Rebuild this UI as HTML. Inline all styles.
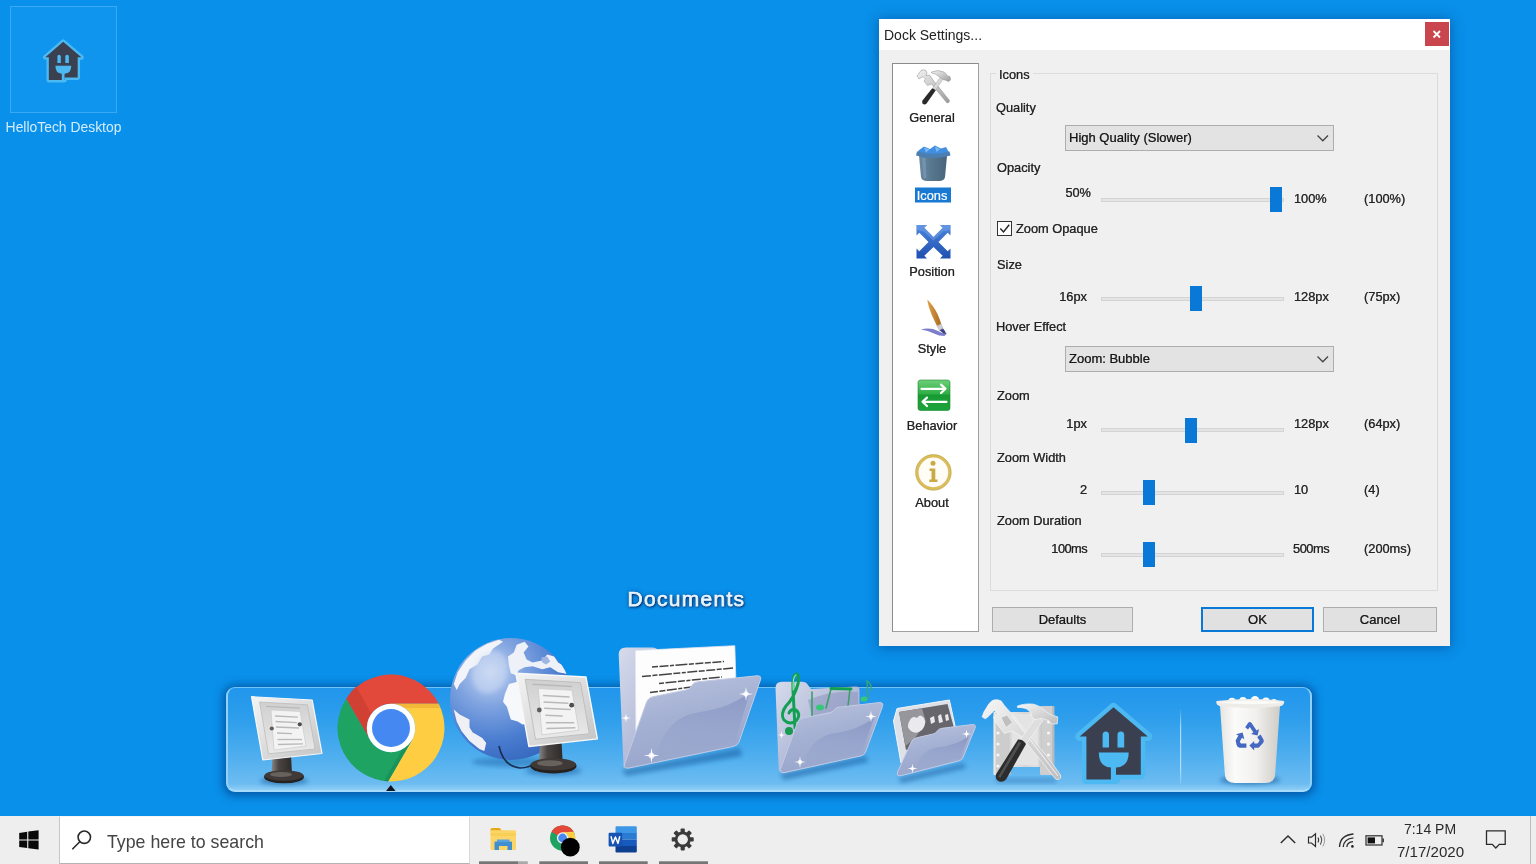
<!DOCTYPE html>
<html>
<head>
<meta charset="utf-8">
<title>Dock Settings</title>
<style>
*{box-sizing:border-box;margin:0;padding:0}
html,body{width:1536px;height:864px;overflow:hidden}
body{background:#0990ea;font-family:"Liberation Sans",sans-serif;position:relative}
.abs{position:absolute}
.t{position:absolute;z-index:4;white-space:nowrap;margin-top:1px;font-size:12.8px;color:#222;-webkit-text-stroke:.22px #2a2a2a;line-height:16px;text-shadow:0 0 .6px rgba(0,0,0,.4)}
.r{text-align:right}
/* desktop icon */
#dicon{position:absolute;left:10px;top:6px;width:107px;height:107px;border:1px solid #39a9f3;background:#0f95ee}
#dlabel{filter:blur(.3px);position:absolute;left:0;top:118px;width:127px;text-align:center;font-size:13.9px;color:#d3ecfd;line-height:18px}
/* dialog */
#dlg{position:absolute;left:879px;top:19px;width:571px;height:627px;background:#f0f0f0;box-shadow:0 1px 12px 1px rgba(0,40,110,.42)}
#title{position:absolute;left:0;top:0;width:571px;height:31px;background:#fff}
#title span{filter:blur(.3px);position:absolute;left:5px;top:8px;font-size:14px;line-height:17px;color:#222}
#close{position:absolute;left:546px;top:3px;width:24px;height:24px;background:#c9464e}
#side{position:absolute;left:13px;top:44px;width:87px;height:569px;background:#fff;border:1px solid #a0a0a0;border-top:1.5px solid #8c8c8c;border-left:1.5px solid #8c8c8c}
#grp{position:absolute;left:111px;top:54px;width:448px;height:518px;border:1px solid #dcdcdc}
.combo{position:absolute;width:269px;height:26px;background:#e3e3e3;border:1px solid #adadad}
.combo span{filter:blur(.3px);-webkit-text-stroke:.22px #2a2a2a;position:absolute;left:3px;top:4px;font-size:13px;line-height:16px;color:#111;text-shadow:0 0 .6px rgba(0,0,0,.35)}
.track{position:absolute;margin-top:.5px;width:183px;height:4px;background:#e4e4e4;border:1px solid #d4d4d4}
.thumb{position:absolute;margin-top:.5px;width:12px;height:25px;background:#0a78d7}
.g{display:inline-block;filter:blur(.3px);-webkit-text-stroke:.22px #2a2a2a}
.btn{position:absolute;top:588px;height:25px;background:#e1e1e1;border:1px solid #adadad;text-align:center;font-size:13px;line-height:23px;color:#111;text-shadow:0 0 .6px rgba(0,0,0,.35)}
/* taskbar */
#tb{position:absolute;left:0;top:816px;width:1536px;height:48px;background:#eeeeee}
#tbin{position:absolute;left:0;top:0;width:1536px;height:48px;filter:blur(.3px)}
#search{position:absolute;left:59px;top:0px;width:411px;height:48px;background:#fff;border-left:1px solid #c6c6c6;border-right:1px solid #d8d8d8;border-top:1px solid #f6f6f6;border-bottom:1.5px solid #b4b4b4}
#search span{filter:blur(.3px);position:absolute;left:47px;top:13.7px;font-size:17.75px;line-height:22px;color:#444}
.run{position:absolute;top:45px;height:3px;width:49px;background:#8a8a8a}
/* dock */
#dock{position:absolute;left:226px;top:687px;width:1086px;height:105px;border-radius:9px;border:2.5px solid #8fd1f9;border-top:1.5px solid #6fc3f7;border-bottom:2px solid #a6dbfb;background:linear-gradient(#2196ec 0%,#2e9eec 30%,#48abee 60%,#6dbcf1 94%,#8fcef6 100%);box-shadow:0 1px 9px 3px rgba(0,55,125,.6)}
#doclbl{position:absolute;left:627.5px;top:586px;font-size:21px;font-weight:400;-webkit-text-stroke:.75px #eaf4fc;letter-spacing:1.3px;color:#eaf4fc;line-height:26px;text-shadow:1px 1px 2px rgba(0,35,90,.95),0 0 4px rgba(0,35,90,.6),0 1px 3px rgba(0,35,90,.6);filter:blur(.35px)}
</style>
</head>
<body>

<!-- desktop icon -->
<div id="dicon"></div>
<div id="dlabel">HelloTech Desktop</div>

<!-- DOCK -->
<div id="doclbl">Documents</div>
<div id="dock"></div>
<!--DOCKICONS-->
<svg class="abs" style="left:0;top:0;filter:blur(.45px)" width="1536" height="864" viewBox="0 0 1536 864">
<defs>
  <linearGradient id="gFrame" x1="0" y1="0" x2="1" y2="1"><stop offset="0" stop-color="#f4f4f4"/><stop offset=".5" stop-color="#dcdcdc"/><stop offset="1" stop-color="#c4c4c6"/></linearGradient>
  <linearGradient id="gScr" x1="0" y1="0" x2="0" y2="1"><stop offset="0" stop-color="#d0d0d0"/><stop offset="1" stop-color="#e9e9e9"/></linearGradient>
  <linearGradient id="gNeck" x1="0" y1="0" x2="1" y2="0"><stop offset="0" stop-color="#8a8684"/><stop offset=".35" stop-color="#4a4542"/><stop offset="1" stop-color="#2e2a28"/></linearGradient>
  <radialGradient id="gGlobe" cx=".33" cy=".28" r=".8"><stop offset="0" stop-color="#c4d4f2"/><stop offset=".35" stop-color="#7fa3e0"/><stop offset=".7" stop-color="#4a7dd0"/><stop offset="1" stop-color="#3467bd"/></radialGradient>
  <linearGradient id="gFold" x1="0" y1="0" x2=".3" y2="1"><stop offset="0" stop-color="#b9c3df"/><stop offset=".5" stop-color="#a5b1d3"/><stop offset="1" stop-color="#99a6cc"/></linearGradient>
  <linearGradient id="gFoldB" x1="0" y1="0" x2="1" y2="1"><stop offset="0" stop-color="#d6dbeb"/><stop offset=".5" stop-color="#b4bcd9"/><stop offset="1" stop-color="#8f9ac1"/></linearGradient>
  <linearGradient id="gWave" x1="0" y1="0" x2="0" y2="1"><stop offset="0" stop-color="#8593c2"/><stop offset="1" stop-color="#98a6ce" stop-opacity=".25"/></linearGradient>
  <linearGradient id="gBin" x1="0" y1="0" x2="1" y2="0"><stop offset="0" stop-color="#e6e4e0"/><stop offset=".25" stop-color="#fbfbfa"/><stop offset=".6" stop-color="#f1f0ed"/><stop offset="1" stop-color="#cfccc6"/></linearGradient>
  <linearGradient id="gSil" x1="0" y1="0" x2="1" y2="1"><stop offset="0" stop-color="#f6f6f6"/><stop offset=".5" stop-color="#d8d8d8"/><stop offset="1" stop-color="#bdbdbd"/></linearGradient>
  <linearGradient id="gPlate" x1="0" y1="0" x2="1" y2="0"><stop offset="0" stop-color="#c9c9c9"/><stop offset=".15" stop-color="#e4e4e4"/><stop offset=".5" stop-color="#d6d6d6"/><stop offset=".85" stop-color="#e2e2e2"/><stop offset="1" stop-color="#c6c6c6"/></linearGradient>
  <linearGradient id="gRedSh" x1="346" y1="699" x2="375" y2="683" gradientUnits="userSpaceOnUse"><stop offset="0" stop-color="#b8362a"/><stop offset="1" stop-color="#e2493a"/></linearGradient>
  <filter id="bl1" x="-20%" y="-20%" width="140%" height="140%"><feGaussianBlur stdDeviation="0.7"/></filter>
  <filter id="bl2" x="-30%" y="-30%" width="160%" height="160%"><feGaussianBlur stdDeviation="2.2"/></filter>
  <g id="spark"><path d="M0-6L.8-.8 6 0 .8.8 0 6-.8.8-6 0-.8-.8Z" fill="#fff"/><circle r="2.2" fill="#fff" opacity=".7"/></g>
  <g id="house">
  <path d="M1113.5 707.3 L1147.8 736.6 L1140.8 736.6 L1140.8 774.8 L1116 774.8 L1116 779.5 L1086.4 779.5 L1086.4 736.6 L1079.7 736.6Z" fill="none" stroke="#4db9f2" stroke-width="9" stroke-linejoin="round"/>
  <path d="M1113.5 707.3 L1147.8 736.6 L1140.8 736.6 L1140.8 774.8 L1116 774.8 L1116 779.5 L1086.4 779.5 L1086.4 736.6 L1079.7 736.6Z" fill="#3b4050"/>
  <path d="M1102.6 747.4 L1102.6 735 Q1102.6 731.5 1105.8 731.5 Q1109 731.5 1109 735 L1109 747.4Z" fill="#4db9f2"/>
  <path d="M1117.5 747.4 L1117.5 735 Q1117.5 731.5 1120.8 731.5 Q1124.2 731.5 1124.2 735 L1124.2 747.4Z" fill="#4db9f2"/>
  <path d="M1098.8 752.5 L1128.7 752.5 Q1128.7 767 1116 767.5 L1116 780 L1110.9 780 L1110.9 767.5 Q1098.8 767 1098.8 752.5Z" fill="#4db9f2"/>
</g>
  <g id="monitor">
    <ellipse cx="284" cy="781" rx="24" ry="4" fill="#0c4f92" opacity=".5" filter="url(#bl2)"/>
    <path d="M272.5 757 L291 755 L292 774 L271.5 774Z" fill="url(#gNeck)"/>
    <ellipse cx="284" cy="777" rx="20" ry="6.3" fill="#262220"/>
    <ellipse cx="284" cy="775.5" rx="19.5" ry="5.2" fill="#3f3a37"/>
    <ellipse cx="281" cy="774.5" rx="11" ry="2.6" fill="#8a837e" opacity=".55"/>
    <path d="M251.5 696.7 L312.2 700 L322 753.5 L262.8 760Z" fill="url(#gFrame)" stroke="#f8f8f8" stroke-width="1.2" stroke-linejoin="round"/>
    <path d="M259.6 702 L307.5 704.8 L315 749 L268.5 753.8Z" fill="url(#gScr)" stroke="#bdbdbd" stroke-width=".8"/>
    <path d="M271 710 L300 711.5 L306 746 L274 750Z" fill="#f3f3f3" stroke="#c8c8c8" stroke-width=".6"/>
    <g stroke="#b9b9b9" stroke-width="1.3" fill="none">
      <path d="M266 706.3 L300 708.2"/><path d="M275 716 L298 717.2"/><path d="M275.5 721.5 L297 722.6"/><path d="M276 727 L299 728"/><path d="M277 733 L292 733.6"/><path d="M277.5 739.5 L302 739.5"/><path d="M278 744.5 L303 743.8"/>
    </g>
    <circle cx="271.8" cy="728.5" r="2.1" fill="#5d5d5d"/><circle cx="299.8" cy="724.3" r="2.1" fill="#4d4d4d"/>
  </g>
</defs>

<!-- 1: monitor -->
<use href="#monitor"/>

<!-- 2: chrome -->
<g>
  <path d="M391.0 703.8 L438.7 703.8 A53.5 53.5 0 0 0 346.2 698.8 L370.0 740.1 A24.2 24.2 0 0 1 391.0 703.8 Z" fill="#e2493a"/>
  <path d="M346.2 698.8 L370.0 740.1 A24.2 24.2 0 0 1 372 715 L356 686 A53.5 53.5 0 0 0 346.2 698.8Z" fill="#c23b2e" opacity=".55"/>
  <path d="M412.0 740.1 L388.1 781.4 A53.5 53.5 0 0 0 438.7 703.8 L391.0 703.8 A24.2 24.2 0 0 1 412.0 740.1 Z" fill="#ffcd42"/>
  <path d="M391 703.8 L438.7 703.8 L440 708 L404 708 A24.2 24.2 0 0 0 391 703.8Z" fill="#e9a832" opacity=".55"/>
  <path d="M370.0 740.1 L346.2 698.8 A53.5 53.5 0 0 0 388.1 781.4 L412.0 740.1 A24.2 24.2 0 0 1 370.0 740.1 Z" fill="#1ea362"/>
  <path d="M412 740.1 L388.1 781.4 L384 780.8 L406 743 Z" fill="#16834d" opacity=".5"/>
  <circle cx="391" cy="728" r="24.2" fill="#fff"/>
  <circle cx="391" cy="728" r="19" fill="#4688f1"/>
  <path d="M386 791 L390.8 785 L395.6 791Z" fill="#101820"/>
</g>

<!-- 3: globe + monitor -->
<g>
  <ellipse cx="512" cy="762" rx="40" ry="5" fill="#0c4f92" opacity=".35" filter="url(#bl2)"/>
  <circle cx="511" cy="699" r="61" fill="url(#gGlobe)"/>
  <clipPath id="cGlobe"><circle cx="511" cy="699" r="61"/></clipPath>
  <g clip-path="url(#cGlobe)" filter="url(#bl1)">
        <path d="M453.8 684.0 L457.7 672.2 L465.6 660.4 L475.4 650.6 L487.2 643.7 L499.0 639.8 L503.0 641.7 L493.1 648.6 L489.2 654.5 L482.3 656.5 L477.4 664.4 L469.5 669.3 L465.6 678.1 L459.7 684.0 L456.7 689.9Z" fill="#f2f4f9"/>
    <path d="M453.8 709.6 L459.7 714.5 L469.5 719.5 L469.5 727.3 L472.5 732.2 L482.3 738.1 L486.2 743.1 L484.3 750.9 L479.4 749.0 L469.5 741.1 L461.6 731.3 L456.7 721.4Z" fill="#eef0f6"/>
    <path d="M507.9 656.5 L513.8 652.5 L516.7 644.7 L524.6 641.7 L528.5 646.6 L523.6 652.5 L526.6 659.4 L532.5 662.4 L542.3 660.4 L547.2 654.5 L554.1 656.5 L558.1 662.4 L565.9 667.3 L568.9 674.2 L558.1 672.2 L550.2 667.3 L542.3 669.3 L532.5 666.3 L524.6 667.3 L518.7 670.3 L515.8 675.2 L510.8 673.2 L508.9 665.3Z" fill="#eef1f7"/>
    <path d="M508.9 684.0 L516.7 682.1 L524.6 684.0 L528.5 689.9 L528.5 723.4 L522.6 724.4 L517.7 721.4 L510.8 719.5 L508.9 713.5 L506.9 706.7 L503.0 701.7 L504.9 693.9Z" fill="#f7f8fb"/>
    <path d="M541.3 657.5 L547.2 656.5 L550.2 661.4 L546.3 664.4 L542.3 662.4Z" fill="#9fb6e3"/>
    <ellipse cx="490" cy="672" rx="17" ry="22" fill="#d5e0f6" opacity=".45" transform="rotate(20 490 672)" filter="url(#bl2)"/>
  </g>
  <path d="M499 746 Q503 766 520 768 Q530 768 536 762" fill="none" stroke="#1b2d50" stroke-width="1.6"/>
  <use href="#monitor" transform="translate(515.8,673.2) scale(1.157) translate(-251.5,-696.7)"/>
</g>

<!-- 4: documents folder -->
<g>
  <path d="M622 770 L740 748 L742 756 L626 776Z" fill="#0c4f92" opacity=".45" filter="url(#bl2)"/>
  <path d="M618.7 655 Q618.7 647.6 626 647.6 L652 647.6 Q657 647.6 659 652 L662 656 L700 656 L700 740 L623.6 767.7Z" fill="url(#gFoldB)"/>
  <path d="M635.4 650.6 L734.8 645.7 L736.5 700 L636 744Z" fill="#fdfdfd" stroke="#e4e6ee" stroke-width=".8"/>
  <g stroke="#222" stroke-width="1.5" opacity=".85" filter="url(#bl1)">
    <path d="M652 667 L724 661.5" stroke-dasharray="6 1.5 9 1.5 4 1.5 12 1.5 5 1.5 8 1.5"/><path d="M642 676.5 L733 668" stroke-dasharray="9 1.5 5 1.5 13 1.5 7 1.5 4 1.5 10 1.5 6 1.5"/><path d="M659 683.5 L722 677" stroke-dasharray="5 1.5 11 1.5 7 1.5 4 1.5 9 1.5"/><path d="M650 692.5 L692 687" stroke-dasharray="8 1.5 6 1.5 10 1.5 4 1.5"/>
  </g>
  <path d="M646.2 703 Q648 697.5 654 696.5 L686 690 Q690 689 691.5 686 Q693 682.5 698 681.8 L757 675.8 Q762 675.5 760.4 680 L739 742 Q737.5 745.5 733 746.5 L629 768 Q623 769 624.6 764 Z" fill="url(#gFold)" stroke="#c3cbe4" stroke-width="1"/>
  <path d="M657 752 Q668 716 700 712 Q730 708 750 692 L736 738 Q735 741 731 742 L660 757 Q655 758 657 752Z" fill="url(#gWave)" opacity=".85"/>
  <use href="#spark" transform="translate(651.5,755.5) scale(1.3)"/>
  <use href="#spark" transform="translate(746,694) scale(1.2)"/>
  <use href="#spark" transform="translate(626,718) scale(.8)"/>
</g>

<!-- 5: music folder -->
<g>
  <path d="M780 774 L866 756 L868 762 L784 780Z" fill="#0c4f92" opacity=".45" filter="url(#bl2)"/>
  <path d="M775.5 688 Q775.5 681.7 782 681.7 L802 681.7 Q806 681.7 808 685 L811 689 L856 686.5 Q859.5 686.5 859.5 690 L859.5 750 L778.8 771Z" fill="url(#gFoldB)"/>
  <path d="M808 700 Q830 690 858 692 L858 705 L812 716Z" fill="#8f9ac2" opacity=".6"/>
  <g fill="none" stroke="#13a053" stroke-linecap="round">
    <path d="M795 728 L793 690 Q792 676 796 674 Q800 674 798 684 Q794 698 786 706 Q780 714 784 720 Q790 726 797 720 Q801 714 796 710 Q791 708 789 713" stroke-width="3"/>
    <path d="M793.2 690 Q792.4 677 796 675" stroke="#9fe6c0" stroke-width="1.2"/>
    <path d="M812 692 L812 716" stroke-width="1.6" stroke="#3f9d6c"/>
    <path d="M831 689 L826 708" stroke-width="1.6" stroke="#3f9d6c"/>
    <path d="M850 689 L848 706" stroke-width="1.6" stroke="#3f9d6c"/>
    <path d="M831 688.5 L851 689" stroke-width="3"/>
    <path d="M867 681 L868 698" stroke-width="1.4" stroke="#3aa874"/>
    <path d="M867 681 Q872 684 871 690" stroke-width="1.4" stroke="#3aa874"/>
  </g>
  <circle cx="789" cy="731" r="4" fill="#159a50"/>
  <ellipse cx="820" cy="707.5" rx="4" ry="3" fill="#35c878"/>
  <ellipse cx="864" cy="699" rx="3.4" ry="2.6" fill="#35c878"/>
  <path d="M797.4 723 Q799 718.5 804 717.8 L829 713.2 Q832.5 712.5 834 710 Q835.5 707.5 839 707.2 L879 702.6 Q884 702.2 882.5 706.5 L865.5 752 Q864.5 755 861 755.8 L785 772.5 Q779 773.5 780.6 768.5 Z" fill="url(#gFold)" stroke="#c3cbe4" stroke-width="1"/>
  <path d="M805 760 Q812 736 836 733 Q858 730 874 718 L863 749 Q862 751.5 859 752 L808 763.5 Q804 764 805 760Z" fill="url(#gWave)" opacity=".85"/>
  <use href="#spark" transform="translate(800,762)"/>
  <use href="#spark" transform="translate(871,716.5)"/>
  <use href="#spark" transform="translate(781.5,735) scale(.7)"/>
</g>

<!-- 6: pictures folder -->
<g>
  <path d="M898 778 L964 763 L966 768 L902 783Z" fill="#0c4f92" opacity=".45" filter="url(#bl2)"/>
  <path d="M893.5 721 L897 708.5 L949.4 700 L955.5 728 L955 748 L901 763Z" fill="#dfe1e8" stroke="#f4f5f8" stroke-width="1"/>
  <path d="M899 712 L947.5 704 L953.5 726 L953 738 L906 750Z" fill="#66666c"/>
  <path d="M899 712 L922 708.2 L926 722 L915 738 L905.5 746Z" fill="#96969c"/>
  <g fill="#e9e9ee" filter="url(#bl1)">
    <path d="M909 722 Q912 715 917 718 Q920 713 924 718 Q927 724 922 730 Q916 735 911 731 Q906 727 909 722Z"/>
    <path d="M930 718 L934 716 L935 722 L931 724Z"/><path d="M938 716 L941 714 L943 722 L939 723Z"/><path d="M945 715 L948 714 L949 720 L946 721Z"/>
  </g>
  <path d="M911.3 742 Q912.5 738.5 917 737.7 L933 734 Q936 733.3 937.3 731 Q938.5 728.8 942 728.3 L972 724.6 Q976.5 724.2 975.1 728 L963 757.5 Q962 760 959 760.8 L901.5 775.5 Q896 776.8 897.6 772 Z" fill="url(#gFold)" stroke="#c3cbe4" stroke-width="1"/>
  <path d="M917 765.5 Q922 749 940 747 Q957 745 969 736 L961 756 Q960 758 957.5 758.5 L920 768 Q916 769 917 765.5Z" fill="url(#gWave)" opacity=".85"/>
  <use href="#spark" transform="translate(912.5,768.5) scale(.85)"/>
  <use href="#spark" transform="translate(966.5,734) scale(.8)"/>
</g>

<!-- 7: tools -->
<g>
  <path d="M996 778 L1056 778 L1056 783 L996 783Z" fill="#0c4f92" opacity=".3" filter="url(#bl2)"/>
  <rect x="993.6" y="712" width="17" height="63" rx="1.5" fill="#cdcdcd"/>
  <rect x="1040" y="706" width="14.2" height="69" rx="1.5" fill="#cfcfcf"/>
  <rect x="1008" y="712" width="34" height="55" fill="url(#gPlate)"/>
  <rect x="1012" y="714" width="26" height="51" fill="#e4e4e4"/>
  <rect x="993.6" y="712" width="2" height="63" fill="#e9e9e9"/><rect x="1052.2" y="706" width="2" height="69" fill="#b9b9b9"/>
  <g fill="#f6f6f6"><circle cx="998" cy="733" r="1.6"/><circle cx="998" cy="744" r="1.6"/><circle cx="998" cy="755" r="1.6"/><circle cx="998" cy="766" r="1.6"/><circle cx="1048.5" cy="722" r="1.6"/><circle cx="1048.5" cy="733" r="1.6"/><circle cx="1048.5" cy="744" r="1.6"/><circle cx="1048.5" cy="755" r="1.6"/></g>
  <!-- wrench -->
  <path d="M982.1 716.9 L984 711.8 L989.1 703.6 Q992 699.7 995.5 699.7 Q999 699.7 1001.2 701 L1004.4 705.5 L1008.2 709.9 L1012 713.7 L1023.5 728.4 L1036.2 743.7 L1048.9 758.9 L1060.4 774.8 Q1061.5 778.5 1059.1 779.3 Q1057 780 1055.3 778.7 L1043.8 764 L1031.1 748.7 L1020.9 736 L1012 730.9 L1004.4 733.5 L999.3 727.1 L995.5 722 L993.6 716.9 L997.4 713.7 L994.2 710.6 L987.8 716.9 L985.3 718.8Z" fill="url(#gSil)" stroke="#f7f7f7" stroke-width=".7"/>
  <path d="M1001 717.5 L1007 715 L1012.5 722.5 L1006 727.5Z" fill="#bfbfbf" stroke="#ededed" stroke-width=".8"/>
  <path d="M1012 716 L1058 776" stroke="#fff" stroke-width="1.2" opacity=".6"/>
  <!-- hammer -->
  <path d="M1036.8 716.5 L1043 720.5 L1025.2 745.5 L1018.8 741.5Z" fill="#dedede" stroke="#f6f6f6" stroke-width=".6"/>
  <path d="M1017.4 706.1 Q1021 704.6 1024.7 704.2 Q1029 703.6 1033.7 704.2 Q1038 705.4 1041.3 707.4 L1046.4 711.8 Q1049 714 1051.5 715 L1057.8 716.9 L1057.2 723.9 L1051.5 723.9 L1048.9 720.7 L1041.3 718.2 L1036.2 719.5 L1032.4 718.2 L1031.1 713.1 Q1029 710.5 1026 708.6 Q1022 707.4 1017.4 707.4Z" fill="url(#gSil)" stroke="#f7f7f7" stroke-width=".7"/>
  <path d="M1018 739.6 Q1022.5 739 1026 744 L1006 779.5 Q1002 783.5 997.5 780.5 Q994.5 777.5 996.5 773.5Z" fill="#2c2c2c"/>
  <path d="M1018.8 741.5 L1021.2 743 L1000.2 778 L998.2 776.5Z" fill="#5e5e5e" opacity=".7"/>
</g>

<!-- 8: hellotech house -->
<use href="#house"/>
<use href="#house" transform="translate(63.2,41.8) scale(.53) translate(-1113.5,-707.3)"/>

<!-- separator -->
<linearGradient id="gSep" x1="0" y1="0" x2="0" y2="1"><stop offset="0" stop-color="#c9e9fc" stop-opacity="0"/><stop offset=".25" stop-color="#c9e9fc" stop-opacity=".8"/><stop offset=".8" stop-color="#c9e9fc" stop-opacity=".8"/><stop offset="1" stop-color="#c9e9fc" stop-opacity=".2"/></linearGradient><rect x="1180" y="708" width="1.2" height="76" fill="url(#gSep)"/>

<!-- 9: recycle bin -->
<g>
  <ellipse cx="1250" cy="780" rx="30" ry="5" fill="#0c4f92" opacity=".5" filter="url(#bl2)"/>
  <path d="M1220 706 L1280 706 L1275 776 Q1274 782.5 1265 783 L1235 783 Q1226 782.5 1225 776Z" fill="url(#gBin)"/>
  <g fill="#fbfbfb" filter="url(#bl1)"><circle cx="1232" cy="701.5" r="3.8"/><circle cx="1243" cy="700.8" r="3.8"/><circle cx="1255" cy="700.3" r="4.2"/><circle cx="1266" cy="701.3" r="3.8"/><circle cx="1274" cy="702" r="3"/></g>
  <path d="M1216.5 701 Q1250 697 1284 701 Q1285 705 1280 706.3 Q1250 709.5 1220 706.3 Q1215.5 705 1216.5 701Z" fill="#eeece8"/>
  <path d="M1218 702.5 Q1250 698.5 1282.5 702.5 Q1250 706 1218 702.5Z" fill="#fafaf9"/>
  <g fill="#4468c2" filter="url(#bl1)">
    <path d="M1245.2 727.2 L1248.2 722.8 Q1249.6 721.2 1251.4 722.8 L1256.6 730.4 L1259 729 L1257.6 735.6 L1251 734 L1253.4 732.4 L1249.8 727 L1248 729.4Z"/>
    <path d="M1260.6 734.6 L1263.6 739.8 Q1264.4 741.8 1262.6 743.4 L1258.6 747.8 L1254.2 747.8 L1254.2 750.4 L1249.4 745.6 L1254.2 741 L1254.2 743.6 L1257.6 743.6 L1259.6 740.8 L1257.2 737Z"/>
    <path d="M1246.4 747.8 L1239.8 747.8 Q1237.4 747.4 1236.6 745 L1235.6 740.6 L1238.4 735.6 L1236 734.2 L1242.6 732.6 L1244.4 739.2 L1242 737.8 L1239.8 741.4 L1240.8 743.6 L1246.4 743.6Z"/>
  </g>
</g>
</svg>
<!--/DOCKICONS-->

<!-- DIALOG -->
<div id="dlg">
  <div id="title"><span>Dock Settings...</span><div id="close"></div></div>
  <div id="side"></div>
  <div id="grp"></div>
  <!--CONTENT-->
  <div class="btn" style="left:113px;width:141px"><span class="g">Defaults</span></div>
  <div class="btn" style="left:322px;width:113px;border:2px solid #0a78d7;line-height:21px"><span class="g">OK</span></div>
  <div class="btn" style="left:444px;width:114px"><span class="g">Cancel</span></div>
</div>

<!--DLGCONTENT-->
<div id="dc" class="abs" style="left:0;top:0;width:1536px;height:864px;filter:blur(.35px)">
<svg class="abs" style="left:879px;top:19px;z-index:3" width="571" height="627" viewBox="879 19 571 627">
<defs>
  <linearGradient id="sSil" x1="0" y1="0" x2="1" y2="1"><stop offset="0" stop-color="#f2f2f2"/><stop offset=".5" stop-color="#c9c9c9"/><stop offset="1" stop-color="#9a9a9a"/></linearGradient>
  <linearGradient id="sBox" x1="0" y1="0" x2="1" y2="0"><stop offset="0" stop-color="#6a899f"/><stop offset=".5" stop-color="#56758c"/><stop offset="1" stop-color="#486479"/></linearGradient>
  <linearGradient id="sGreen" x1="0" y1="0" x2="0" y2="1"><stop offset="0" stop-color="#6fd07a"/><stop offset=".45" stop-color="#2fae45"/><stop offset=".5" stop-color="#189a33"/><stop offset="1" stop-color="#1fa33b"/></linearGradient>
  <linearGradient id="sBlueX" x1="0" y1="0" x2="0" y2="1"><stop offset="0" stop-color="#4d86dd"/><stop offset="1" stop-color="#1f4fb0"/></linearGradient>
  <linearGradient id="sBrush" x1="0" y1="0" x2="1" y2="0"><stop offset="0" stop-color="#e0a24a"/><stop offset="1" stop-color="#a8691f"/></linearGradient>
  <filter id="sb" x="-20%" y="-20%" width="140%" height="140%"><feGaussianBlur stdDeviation="0.5"/></filter>
</defs>
<!-- close X -->
<path d="M1433.5 31 L1440 37.5 M1440 31 L1433.5 37.5" stroke="#fff" stroke-width="1.8"/>
<!-- General -->
<g filter="url(#sb)">
  <path d="M917 76 L921 70.5 Q923.5 69 926 70.5 L927 73 L926 75.5 L929.5 75 L933 80 L949.5 100.5 Q949.5 103 947 103 L931.5 84 L927.5 85.5 L924 81 L925.5 79 L923 76.5 L919 79Z" fill="url(#sSil)" stroke="#8d8d8d" stroke-width=".5"/>
  <path d="M931.5 72 Q938 69 944 72 Q946.5 74 947.5 76 L950 76.5 L950.5 80 L948.5 81.5 L945 80 L942.5 79.5 L939.5 77 Q936 73.5 931.5 73Z" fill="url(#sSil)" stroke="#8d8d8d" stroke-width=".5"/>
  <path d="M940 77.5 L942.8 79.5 L935 91 L932.2 89Z" fill="#d7d7d7" stroke="#9a9a9a" stroke-width=".4"/>
  <path d="M932 88.6 Q934 88.3 935.6 90.6 L926.6 103.6 Q924.6 105.2 922.7 103.8 Q921.6 102.4 922.5 100.6Z" fill="#2c2c2c"/>
</g>
<!-- Icons (blue box) -->
<g filter="url(#sb)">
  <path d="M919 156 L947 156 L945 177 Q944.5 180.5 940 181 L926 181 Q921.5 180.5 921 177Z" fill="url(#sBox)"/>
  <path d="M917 151.5 Q933 147.5 949.5 151.5 L950.5 155.5 Q933 160.5 916 155.5Z" fill="#4b7fb4"/>
  <path d="M918.5 150.5 L924 146.5 L930 149 L935 145.5 L941 148.5 L946 147 L948.5 151.5 Q933 156 918.5 151.5Z" fill="#3f8fe0"/>
  <path d="M924 147.5 L929.5 149.5 L926 152.5Z M935 146.5 L940 149 L936.5 152Z" fill="#7db8f2"/>
  <path d="M922 158 L925.5 158 L926.5 178 L923.5 178Z" fill="#7d9fbc" opacity=".6"/>
</g>
<rect x="915" y="187.5" width="36" height="15" fill="#1979d2"/>
<!-- Position -->
<g filter="url(#sb)">
  <path d="M916.5 225 L927 225 L924.3 227.8 L933.5 237 L942.7 227.8 L940 225 L950.5 225 L950.5 235.5 L947.7 232.8 L938.5 242 L947.7 251.2 L950.5 248.5 L950.5 258.5 L940 258.5 L942.7 255.8 L933.5 247 L924.3 255.8 L927 258.5 L916.5 258.5 L916.5 248.5 L919.3 251.2 L928.5 242 L919.3 232.8 L916.5 235.5Z" fill="url(#sBlueX)"/>
  <path d="M916.5 225 L927 225 L924.3 227.8 L933.5 237 L942.7 227.8 L940 225 L950.5 225 L950.5 230 L943 231.5 L933.5 240.5 L924 231.5 L916.5 230Z" fill="#7aa8ea" opacity=".45"/>
</g>
<!-- Style (brush) -->
<g filter="url(#sb)">
  <path d="M921 329.5 Q930 327 938 331 Q943 334 947 333 L944.5 336 Q939 336 934 333.5 Q928 330.5 921 329.5Z" fill="#5a5cc0" opacity=".8"/>
  <path d="M927.3 299.5 Q933 305 937.5 314 Q940 319.5 941.2 324 L937 326 Q934.5 321 932 315.5 Q928 306 927.3 299.5Z" fill="url(#sBrush)"/>
  <path d="M937 326 L941.2 324 L943 328.5 L939.5 330.3Z" fill="#cfcfd3" stroke="#9c9ca3" stroke-width=".4"/>
  <path d="M939.5 330.3 L943 328.5 Q945.5 331 946.3 334.3 Q942.5 333.5 939.5 330.3Z" fill="#3f3f86"/>
</g>
<!-- Behavior -->
<g filter="url(#sb)">
  <rect x="918" y="380" width="32" height="30.5" rx="2.5" fill="url(#sGreen)" stroke="#1c8a33" stroke-width=".6"/>
  <path d="M921.5 388.8 L945.5 388.8 L941 384.6 M945.5 388.8 L941 393" fill="none" stroke="#fff" stroke-width="2.2" stroke-linejoin="round" stroke-linecap="round"/>
  <path d="M946.5 401.8 L922.5 401.8 L927 397.6 M922.5 401.8 L927 406" fill="none" stroke="#fff" stroke-width="2.2" stroke-linejoin="round" stroke-linecap="round"/>
</g>
<!-- About -->
<g filter="url(#sb)">
  <circle cx="933.4" cy="472.4" r="16.3" fill="#fffdf6" stroke="#d9bd5d" stroke-width="3"/>
  <circle cx="933.4" cy="472.4" r="17.8" fill="none" stroke="#bfa040" stroke-width=".6"/>
  <circle cx="933" cy="463.2" r="2.5" fill="#c9aa46"/>
  <path d="M929.5 468.5 L935.3 468.5 L935.3 479.5 L937.5 479.5 L937.5 482 L929.3 482 L929.3 479.5 L931.5 479.5 L931.5 471 L929.5 471Z" fill="#c9aa46"/>
</g>
<!-- combo chevrons -->
<path d="M1317.5 135.5 L1322.8 140.8 L1328 135.5" fill="none" stroke="#444" stroke-width="1.3"/>
<path d="M1317.5 356.5 L1322.8 361.8 L1328 356.5" fill="none" stroke="#444" stroke-width="1.3"/>
<!-- checkbox -->
<rect x="997.5" y="221.5" width="14" height="14" fill="#fff" stroke="#333" stroke-width="1"/>
<path d="M1000.3 228.5 L1003.5 232 L1009.2 224.8" fill="none" stroke="#222" stroke-width="1.4"/>
</svg>

<div class="t" style="left:883px;top:109px;width:98px;text-align:center">General</div>
<div class="t" style="left:883px;top:187px;width:98px;text-align:center;color:#fff;text-shadow:none;-webkit-text-stroke:.2px #fff">Icons</div>
<div class="t" style="left:883px;top:263px;width:98px;text-align:center">Position</div>
<div class="t" style="left:883px;top:340px;width:98px;text-align:center">Style</div>
<div class="t" style="left:883px;top:417px;width:98px;text-align:center">Behavior</div>
<div class="t" style="left:883px;top:494px;width:98px;text-align:center">About</div>

<div class="abs" style="left:996px;top:68px;width:37px;height:12px;background:#f0f0f0"></div><div class="t" style="left:999px;top:66px">Icons</div>
<div class="t" style="left:996px;top:99px">Quality</div>
<div class="combo" style="left:1065px;top:125px"><span>High Quality (Slower)</span></div>
<div class="t" style="left:997px;top:159px">Opacity</div>
<div class="t r" style="left:1030px;width:61px;top:184px">50%</div>
<div class="track" style="left:1101px;top:197px"></div><div class="thumb" style="left:1270px;top:186px"></div>
<div class="t" style="left:1294px;top:190px">100%</div><div class="t" style="left:1364px;top:190px">(100%)</div>
<div class="t" style="left:1016px;top:220px">Zoom Opaque</div>
<div class="t" style="left:997px;top:256px">Size</div>
<div class="t r" style="left:1030px;width:57px;top:288px">16px</div>
<div class="track" style="left:1101px;top:296px"></div><div class="thumb" style="left:1190px;top:285px"></div>
<div class="t" style="left:1294px;top:288px">128px</div><div class="t" style="left:1364px;top:288px">(75px)</div>
<div class="t" style="left:996px;top:318px">Hover Effect</div>
<div class="combo" style="left:1065px;top:346px"><span>Zoom: Bubble</span></div>
<div class="t" style="left:997px;top:387px">Zoom</div>
<div class="t r" style="left:1030px;width:57px;top:415px">1px</div>
<div class="track" style="left:1101px;top:427px"></div><div class="thumb" style="left:1185px;top:417px"></div>
<div class="t" style="left:1294px;top:415px">128px</div><div class="t" style="left:1364px;top:415px">(64px)</div>
<div class="t" style="left:997px;top:449px">Zoom Width</div>
<div class="t r" style="left:1030px;width:57px;top:481px">2</div>
<div class="track" style="left:1101px;top:490px"></div><div class="thumb" style="left:1143px;top:479px"></div>
<div class="t" style="left:1294px;top:481px">10</div><div class="t" style="left:1364px;top:481px">(4)</div>
<div class="t" style="left:997px;top:512px">Zoom Duration</div>
<div class="t r" style="left:1030px;width:57px;top:540px;letter-spacing:-.55px">100ms</div>
<div class="track" style="left:1101px;top:552px"></div><div class="thumb" style="left:1143px;top:541px"></div>
<div class="t" style="left:1293px;top:540px;letter-spacing:-.45px">500ms</div><div class="t" style="left:1364px;top:540px">(200ms)</div>
</div>
<!--/DLGCONTENT-->

<!-- TASKBAR -->
<div id="tb"><div id="tbin">
  <div id="search"><span>Type here to search</span></div>
  <!--TBICONS-->
<svg class="abs" style="left:0;top:0" width="1536" height="48" viewBox="0 816 1536 48">
  <defs><filter id="tbb" x="-20%" y="-20%" width="140%" height="140%"><feGaussianBlur stdDeviation="0.45"/></filter></defs>
  <!-- windows logo -->
  <g fill="#0a0a0a">
    <path d="M19.2 833 L27.2 831.8 L27.2 839.4 L19.2 839.4Z"/><path d="M28.3 831.6 L38.6 830.2 L38.6 839.4 L28.3 839.4Z"/>
    <path d="M19.2 840.5 L27.2 840.5 L27.2 848 L19.2 846.9Z"/><path d="M28.3 840.5 L38.6 840.5 L38.6 849.6 L28.3 848.2Z"/>
  </g>
  <!-- search glass -->
  <g fill="none" stroke="#2a2a2a" stroke-width="1.6" stroke-linecap="round"><circle cx="84.3" cy="837.2" r="6.2"/><path d="M79.8 841.8 L72.8 848.8"/></g>
  <!-- file explorer -->
  <g filter="url(#tbb)">
    <path d="M490.5 829.5 Q490.5 828 492 828 L499 828 Q500.5 828 501 829.5 L501.5 831 L490.5 831Z" fill="#e6a91c"/>
    <rect x="490.5" y="830.3" width="25.5" height="19.7" rx="1" fill="#fbd567"/>
    <path d="M490.5 833 L516 833 L516 836 L490.5 836Z" fill="#f7c948" opacity=".6"/>
    <path d="M494.5 850 L494.5 842.5 Q494.5 841.5 495.5 841.5 L511 841.5 Q512 841.5 512 842.5 L512 850 L507.5 850 L507.5 846 L499 846 L499 850Z" fill="#3f8fd0"/>
    <rect x="497" y="839.5" width="12.5" height="2.5" fill="#5aa3de"/>
  </g>
  <!-- chrome small -->
  <g filter="url(#tbb)">
    <circle cx="562.6" cy="838" r="12.6" fill="#1ea362"/>
    <path d="M562.6 838 L551.7 831.7 A12.6 12.6 0 0 1 573.5 831.7 Z" fill="#e2493a"/>
    <path d="M562.6 825.4 A12.6 12.6 0 0 1 573.5 831.7 L562.6 832.2 L557.5 834.9 L551.7 831.7 A12.6 12.6 0 0 1 562.6 825.4Z" fill="#e2493a"/>
    <path d="M573.5 831.7 A12.6 12.6 0 0 1 562 850.6 L567.6 840.9 L567.6 835.1 L562.6 832.2Z" fill="#ffcd42"/>
    <circle cx="562.6" cy="838" r="5.7" fill="#f4f4f4"/><circle cx="562.6" cy="838" r="4.4" fill="#4688f1"/>
    <circle cx="570.3" cy="847.2" r="9.4" fill="#050505"/>
  </g>
  <!-- word -->
  <g filter="url(#tbb)">
    <path d="M615.5 827.5 Q615.5 826.2 616.8 826.2 L635.5 826.2 Q636.8 826.2 636.8 827.5 L636.8 833 L615.5 833Z" fill="#3d96e6"/>
    <rect x="615.5" y="833" width="21.3" height="6.5" fill="#2b7cd3"/>
    <rect x="615.5" y="839.5" width="21.3" height="6.5" fill="#185abd"/>
    <path d="M615.5 846 L636.8 846 L636.8 851.2 Q636.8 852.5 635.5 852.5 L616.8 852.5 Q615.5 852.5 615.5 851.2Z" fill="#103f91"/>
    <rect x="608.6" y="832.8" width="13.6" height="13.8" rx="1" fill="#1752b4"/>
    <path d="M611 836.2 L612.8 843.4 L615.4 837 L618 843.4 L619.8 836.2" fill="none" stroke="#fff" stroke-width="1.5" stroke-linejoin="round"/>
  </g>
  <!-- gear -->
  <g filter="url(#tbb)" transform="translate(682.7,839.4)">
    <g fill="#3a3a3a">
      <rect x="-2.1" y="-11" width="4.2" height="22" rx=".8"/>
      <rect x="-2.1" y="-11" width="4.2" height="22" rx=".8" transform="rotate(45)"/>
      <rect x="-2.1" y="-11" width="4.2" height="22" rx=".8" transform="rotate(90)"/>
      <rect x="-2.1" y="-11" width="4.2" height="22" rx=".8" transform="rotate(135)"/>
      <circle r="8"/>
    </g>
    <circle r="5.2" fill="#eee"/>
  </g>
  <!-- running bars -->
  <g fill="#767676"><rect x="479" y="861.3" width="39" height="2.7"/><rect x="539.3" y="861.3" width="48.7" height="2.7"/><rect x="599" y="861.3" width="48.7" height="2.7"/><rect x="659" y="861.3" width="49" height="2.7"/></g>
  <rect x="518" y="861.3" width="9.8" height="2.7" fill="#a9a9a9"/>
  <!-- tray -->
  <g fill="none" stroke="#2c2c2c" stroke-width="1.4" filter="url(#tbb)">
    <path d="M1280.8 843 L1288 835.9 L1295.2 843"/>
    <path d="M1308.5 837.2 L1311.5 837.2 L1315.5 833.8 L1315.5 846.4 L1311.5 843 L1308.5 843Z" stroke-width="1.2"/>
    <path d="M1318 837.6 Q1319.5 840 1318 842.6" stroke-width="1.1"/>
    <path d="M1320.3 835.6 Q1323 840 1320.3 844.6" stroke-width="1.1" stroke="#555"/>
    <path d="M1322.8 833.8 Q1326.5 840 1322.8 846.4" stroke-width="1" stroke="#9a9a9a"/>
    <path d="M1339.5 847 Q1340 835 1353.5 834" stroke-width="1.3"/>
    <path d="M1343.2 847 Q1343.8 838.6 1353.5 837.8" stroke-width="1.3"/>
    <path d="M1346.8 847 Q1347.2 842 1353 841.6" stroke-width="1.3"/>
    <rect x="1366" y="835.8" width="16" height="9.2" stroke-width="1.2"/>
    <path d="M1383.2 838.6 L1383.2 842.2" stroke-width="1.4"/>
    <path d="M1486.5 830.8 L1505.2 830.8 L1505.2 844.4 L1499.3 844.4 L1495.8 848 L1492.3 844.4 L1486.5 844.4Z" stroke-width="1.3"/>
  </g>
  <circle cx="1352.4" cy="846.4" r="1.3" fill="#222"/>
  <rect x="1367.6" y="837.4" width="7.4" height="6" fill="#111"/>
  <rect x="1530" y="816" width="1" height="48" fill="#bdbdbd"/>
</svg>
<div class="abs" style="filter:blur(.3px);left:1380px;top:5px;width:100px;text-align:center;font-size:14px;line-height:16px;color:#2a2a2a">7:14 PM</div>
<div class="abs" style="filter:blur(.3px);left:1380px;top:28px;width:101px;text-align:center;font-size:15.1px;line-height:16px;color:#2a2a2a">7/17/2020</div>
<!--/TBICONS-->
</div></div>

</body>
</html>
